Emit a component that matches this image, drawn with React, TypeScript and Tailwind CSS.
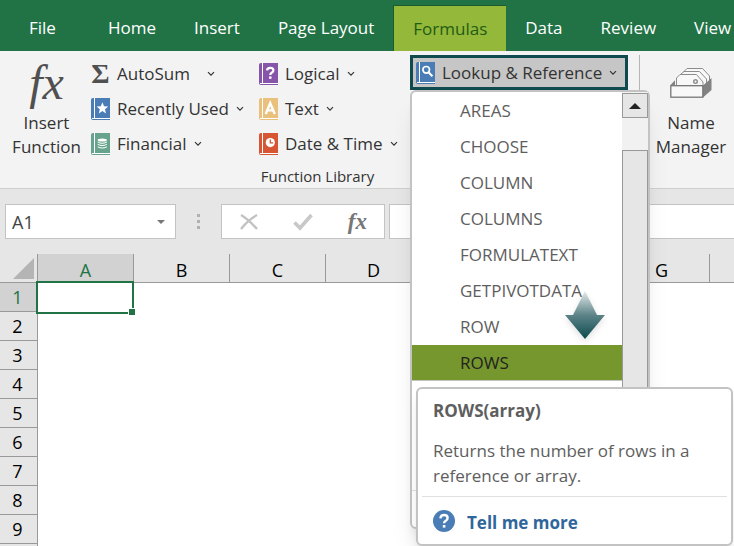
import type { ReactNode } from "react";

const tabs = ["Home", "Insert", "Page Layout", "Formulas", "Data", "Review", "View"];

const functions = ["AREAS", "CHOOSE", "COLUMN", "COLUMNS", "FORMULATEXT", "GETPIVOTDATA", "ROW", "ROWS"];

const columns = [
  { id: "A", label: "A" },
  { id: "B", label: "B" },
  { id: "C", label: "C" },
  { id: "D", label: "D" },
  { id: "E", label: "" },
  { id: "F", label: "" },
  { id: "G", label: "G" },
  { id: "H", label: "" },
];
const rows = [1, 2, 3, 4, 5, 6, 7, 8, 9];

function Chevron({ className = "" }: { className?: string }) {
  return (
    <svg viewBox="0 0 8 8" className={`size-2 shrink-0 ${className}`} fill="none" stroke="#333" strokeWidth="1.2">
      <path d="M1 2.2 4 5.2 7 2.2" />
    </svg>
  );
}

function Book({ color, children }: { color: string; children: ReactNode }) {
  return (
    <svg viewBox="0 0 19 22" className="h-[22px] w-[19px] shrink-0">
      <path d="M2 0H19V22H2Q0 22 0 20V2Q0 0 2 0Z" fill={color} />
      <path d="M3.5 0V20.5" stroke="#fff" strokeWidth="1" />
      <path d="M1 20.5H19" stroke="#fff" strokeWidth="1" />
      {children}
    </svg>
  );
}

const starIcon = (
  <Book color="#4a7db5">
    <path d="M11.4 4.2 13 8.2 17.2 8.5 14 11.2 15 15.4 11.4 13.1 7.8 15.4 8.8 11.2 5.6 8.5 9.8 8.2Z" fill="#fff" />
  </Book>
);

const coinsIcon = (
  <Book color="#68a48d">
    <g fill="#fff">
      <ellipse cx="11.3" cy="7" rx="4.6" ry="1.5" />
      <path d="M6.7 8.4Q11.3 11 15.9 8.4V9.4Q11.3 12 6.7 9.4Z" />
      <path d="M6.7 10.8Q11.3 13.4 15.9 10.8V11.8Q11.3 14.4 6.7 11.8Z" />
      <path d="M6.7 13.2Q11.3 15.8 15.9 13.2V14.2Q11.3 16.8 6.7 14.2Z" />
    </g>
  </Book>
);

const questionIcon = (
  <Book color="#8654a8">
    <path d="M8 7.4Q8.2 4.8 11.3 4.8 14.4 4.8 14.4 7.3 14.4 8.8 12.7 9.7 11.3 10.5 11.3 12" fill="none" stroke="#fff" strokeWidth="2.2" />
    <rect x="10.1" y="13.4" width="2.4" height="2.4" fill="#fff" />
  </Book>
);

const letterIcon = (
  <Book color="#e9c07c">
    <path d="M6.7 16 11.2 5.2 15.8 16M8.3 12.4H14.2" fill="none" stroke="#fff" strokeWidth="2.4" />
  </Book>
);

const clockIcon = (
  <Book color="#d65532">
    <circle cx="11.3" cy="9.6" r="4.6" fill="#fff" />
    <path d="M11.3 6.4V9.8H14.2" fill="none" stroke="#d65532" strokeWidth="1.3" />
  </Book>
);

const searchIcon = (
  <Book color="#4a7db5">
    <circle cx="10.2" cy="7.8" r="3.3" fill="none" stroke="#fff" strokeWidth="1.7" />
    <path d="M12.5 10.2 16.4 14.2" stroke="#fff" strokeWidth="2.2" />
  </Book>
);

function CabinetIcon() {
  return (
    <svg viewBox="0 0 42 32" className="h-8 w-[42px]" fill="#f8f8f8" stroke="#8c8c8c" strokeWidth="1">
      <path d="M14 4.5 17 1.5H32.5L39.5 9V20H14Z" />
      <path d="M10.5 7.5 14 4.5H29.5L36.5 12V20H10.5Z" />
      <path d="M33 18.5 41.5 11V23L33 30.5Z" fill="#828282" stroke="none" />
      <path d="M0.5 18 5 13.2V18Z" fill="#828282" stroke="none" />
      <path d="M6.5 18.5V11L10 7.5H26.5L33 15V18.5Z" />
      <circle cx="25.5" cy="14.6" r="1.8" strokeWidth="1.4" />
      <rect x="0.8" y="18.7" width="32" height="11.5" strokeWidth="1.3" stroke="#777" />
    </svg>
  );
}

function RibbonItem({ icon, label, wide = false }: { icon: ReactNode; label: string; wide?: boolean }) {
  return (
    <button type="button" className="flex h-[35px] items-center gap-[7px] pt-0.5 whitespace-nowrap">
      {icon}
      {label}
      <Chevron className={wide ? "ml-2.5" : ""} />
    </button>
  );
}

function FunctionTip() {
  return (
    <div
      role="tooltip"
      className="absolute top-[295px] left-1 z-20 w-[317px] rounded-md border-2 border-[#c3c3c3] bg-white px-1 text-[#5e5e5e] shadow-lg"
    >
      <div className="px-[11px] pt-2.5 pb-2">
        <h3 className="leading-6 font-bold">ROWS(array)</h3>
        <p className="mt-[15px] leading-[25px]">Returns the number of rows in a reference or array.</p>
      </div>
      <div className="flex h-12 items-center gap-3 border-t border-[#e0e0e0] px-[11px]">
        <svg viewBox="0 0 22 22" className="size-[22px]">
          <circle cx="11" cy="11" r="11" fill="#4a7db5" />
          <path d="M7.4 8.4Q7.8 5 11.1 5 14.6 5 14.6 8 14.6 9.7 12.8 10.8 11.1 11.7 11.1 13.2" fill="none" stroke="#fff" strokeWidth="2.4" />
          <rect x="9.8" y="15" width="2.6" height="2.6" fill="#fff" />
        </svg>
        <a href="#more" className="pt-1 font-bold text-[#2f669c]">Tell me more</a>
      </div>
    </div>
  );
}

function LookupMenu() {
  return (
    <div className="absolute top-full left-0 z-10 w-60 rounded-md border-2 border-[#c3c3c3] bg-white shadow-xl">
      <div className="flex h-[398px]">
        <div role="menu" className="flex-1 pt-px">
          {functions.map((name) => (
            <button
              key={name}
              type="button"
              role="menuitem"
              className={`block h-9 w-full pl-12 text-left ${name === "ROWS" ? "border-b border-[#c3c3c3] bg-[#76962e] text-[#222]" : "text-[#5e5e5e]"}`}
            >
              {name}
            </button>
          ))}
        </div>
        <div className="flex w-[26px] flex-col bg-[#f1f1f1] pt-px">
          <button type="button" aria-label="Scroll up" className="grid h-[25px] place-items-center border border-[#999] bg-[#e6e6e6]">
            <svg viewBox="0 0 12 6" className="h-1.5 w-3">
              <path d="M6 0 12 6H0Z" fill="#222" />
            </svg>
          </button>
          <div className="mt-8 flex-1 border border-[#999] bg-[#e6e6e6]" />
        </div>
      </div>
      <div className="h-[37px] border-t border-[#e0e0e0]" />
      <svg viewBox="0 0 40 48" className="absolute top-[199px] left-[153px] h-12 w-10 drop-shadow-md">
        <defs>
          <linearGradient id="arrow" x1="0" y1="0" x2="0" y2="1">
            <stop offset="0" stopColor="#e4ecec" />
            <stop offset="0.5" stopColor="#5d8488" />
            <stop offset="1" stopColor="#0b4a4f" />
          </linearGradient>
        </defs>
        <path d="M20 0 32 24H40L20 48 0 24H8Z" fill="url(#arrow)" />
      </svg>
      <FunctionTip />
    </div>
  );
}

function Ribbon() {
  return (
    <div className="flex h-[138px] border-b border-[#cfcfcf] bg-[#f3f3f3] pt-1 text-[17px] text-[#333]">
      <div className="shrink-0">
        <div className="flex">
          <button type="button" className="flex w-[91px] flex-col items-center pl-0.5 leading-6">
            <span className="font-['Liberation_Serif',serif] text-[48px] leading-[56px] text-[#505050] italic">fx</span>
            Insert
            <br />
            Function
          </button>
          <div className="w-[168px]">
            <RibbonItem
              icon={<span className="w-[19px] font-['Liberation_Serif',serif] text-[28px] leading-8 font-bold text-[#505050]">Σ</span>}
              label="AutoSum"
              wide
            />
            <RibbonItem icon={starIcon} label="Recently Used" />
            <RibbonItem icon={coinsIcon} label="Financial" />
          </div>
          <div className="w-[151px]">
            <RibbonItem icon={questionIcon} label="Logical" />
            <RibbonItem icon={letterIcon} label="Text" />
            <RibbonItem icon={clockIcon} label="Date & Time" />
          </div>
          <div className="relative w-[229px] self-start">
            <button
              type="button"
              aria-expanded="true"
              className="flex h-[35px] w-[218px] items-center gap-[7px] border-3 border-[#0f4a4f] bg-[#c6c6c6] px-[3px] whitespace-nowrap"
            >
              {searchIcon}
              Lookup & Reference
              <Chevron />
            </button>
            <LookupMenu />
          </div>
        </div>
        <div className="mt-1 pr-1 text-center text-[15px] leading-6">Function Library</div>
      </div>
      <div className="flex shrink-0 border-l border-[#b5b5b5]">
        <button type="button" className="flex w-[92px] flex-col items-center pl-2.5 leading-6">
          <span className="grid h-14 place-items-center">
            <CabinetIcon />
          </span>
          Name
          <br />
          Manager
        </button>
      </div>
    </div>
  );
}

function FormulaBar() {
  return (
    <div className="flex px-[5px] pt-[15px] pb-[15px]">
      <div className="flex h-[35px] w-[171px] shrink-0 items-center border border-[#c3c3c3] bg-white">
        <input aria-label="Name box" defaultValue="A1" className="w-full bg-transparent px-1.5 text-lg text-[#444] outline-none" />
        <svg viewBox="0 0 8 4" className="mr-2.5 h-1 w-2 shrink-0">
          <path d="M0 0H8L4 4Z" fill="#777" />
        </svg>
      </div>
      <div className="flex w-[45px] flex-col items-center justify-center gap-[3px]">
        <span className="size-[3px] bg-[#b0b0b0]" />
        <span className="size-[3px] bg-[#b0b0b0]" />
        <span className="size-[3px] bg-[#b0b0b0]" />
      </div>
      <div className="flex h-[35px] w-[164px] shrink-0 items-center justify-between border border-[#c3c3c3] bg-white px-[17px]">
        <button type="button" aria-label="Cancel">
          <svg viewBox="0 0 20 18" className="h-[18px] w-5" fill="none" stroke="#c2c2c2" strokeWidth="2.4">
            <path d="M2 2Q9 6 18 16M18 2Q9 7 2 16" />
          </svg>
        </button>
        <button type="button" aria-label="Enter">
          <svg viewBox="0 0 20 18" className="h-[18px] w-5" fill="none" stroke="#c8c8c8" strokeWidth="3.6">
            <path d="M1.5 9.5 7 15 18.5 2" />
          </svg>
        </button>
        <button type="button" aria-label="Insert function" className="font-['Liberation_Serif',serif] text-[23px] leading-6 font-bold text-[#777] italic">
          fx
        </button>
      </div>
      <input aria-label="Formula" className="-mr-2 ml-1 h-[35px] min-w-0 flex-1 border border-[#c3c3c3] bg-white" />
    </div>
  );
}

function Sheet() {
  return (
    <table className="w-[806px] table-fixed border-separate border-spacing-0 text-lg leading-6 text-black">
      <thead>
        <tr className="h-[29px]">
          <th className="w-[38px] border-r border-b border-[#999] p-0">
            <svg viewBox="0 0 21 21" className="ml-[13px] size-[21px]">
              <path d="M21 0V21H0Z" fill="#b4b4b4" />
            </svg>
          </th>
          {columns.map(({ id, label }) => (
            <th
              key={id}
              scope="col"
              className={`w-24 border-r border-b border-[#999] p-0 pt-1 font-normal ${id === "A" ? "bg-[#d2d2d2] text-[#217346]" : ""}`}
            >
              {label}
            </th>
          ))}
        </tr>
      </thead>
      <tbody>
        {rows.map((row) => (
          <tr key={row} className="h-[29px]">
            <th
              scope="row"
              className={`border-r border-b border-[#999] p-0 pr-0.5 font-normal ${row === 1 ? "bg-[#d2d2d2] text-[#217346]" : ""}`}
            >
              {row}
            </th>
            {columns.map(({ id }) =>
              id === "A" && row === 1 ? (
                <td key={id} className="relative bg-white p-0">
                  <div className="absolute -top-0.5 right-0 -bottom-0.5 -left-0.5 border-2 border-[#217346]">
                    <span className="absolute -right-[3px] -bottom-[3px] size-[7px] border-t border-l border-white bg-[#217346]" />
                  </div>
                </td>
              ) : (
                <td key={id} className="bg-white p-0" />
              )
            )}
          </tr>
        ))}
        <tr className="h-[29px]">
          <th className="border-r border-[#999] p-0" />
          <td colSpan={columns.length} className="bg-white p-0" />
        </tr>
      </tbody>
    </table>
  );
}

export default function App() {
  return (
    <div className="h-screen overflow-hidden bg-[#e6e6e6] font-['Open_Sans',sans-serif]">
      <nav className="flex h-[51px] bg-[#217346] pt-[5px] text-[17px] text-white">
        <a href="#file" className="flex w-[89px] shrink-0 items-center pl-[29px]">File</a>
        {tabs.map((tab) => (
          <a
            key={tab}
            href={`#${tab}`}
            className={`flex shrink-0 items-center px-[19px] whitespace-nowrap ${tab === "Formulas" ? "border-t border-l border-[#1c5c2c] bg-[#94b83a] text-[#1f5c14]" : ""}`}
          >
            {tab}
          </a>
        ))}
      </nav>
      <Ribbon />
      <FormulaBar />
      <Sheet />
    </div>
  );
}
